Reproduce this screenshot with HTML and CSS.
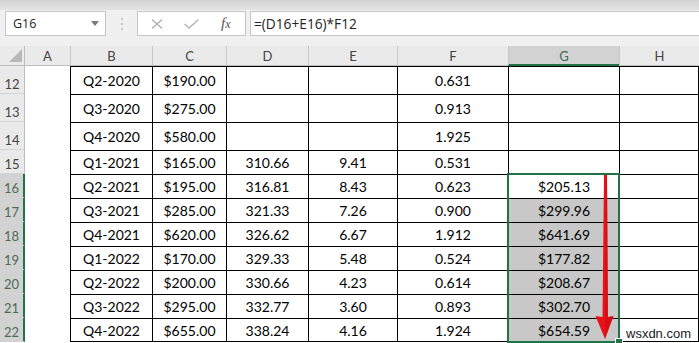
FILE: index.html
```html
<!DOCTYPE html>
<html lang="en">
<head>
  <meta charset="UTF-8" />
  <meta name="viewport" content="width=device-width, initial-scale=1.0" />
  <title>Quarterly Price Sheet</title>
  <link rel="stylesheet" href="styles.css">
</head>
<body>

  <div class="ribbon-edge"></div>
  <div class="fbar">
    <div class="namebox">
      <span>G16</span>
      <svg class="dropdown" width="8" height="5" viewBox="0 0 8 5"><path d="M0 0 H8 L4 5 Z" fill="#7a7a7a"/></svg>
    </div>
    <svg class="grip" width="4" height="14" viewBox="0 0 4 14">
      <rect x="1" y="1" width="2" height="2" fill="#c4c4c4"/>
      <rect x="1" y="6" width="2" height="2" fill="#c4c4c4"/>
      <rect x="1" y="11" width="2" height="2" fill="#c4c4c4"/>
    </svg>
    <div class="fxbox">
      <svg class="cancel" width="12" height="10" viewBox="0 0 12 10"><path d="M1 0.5 L11 9.5 M11 0.5 L1 9.5" stroke="#ababab" stroke-width="1.2" fill="none"/></svg>
      <svg class="enter" width="15" height="10" viewBox="0 0 15 10"><path d="M0.5 5 L5 9 L14.5 0.5" stroke="#b4b4b4" stroke-width="1.4" fill="none"/></svg>
      <span class="fx">f<i>x</i></span>
    </div>
    <div class="formula">=(D16+E16)*F12</div>
  </div>

  <div class="sheet">
    <div class="row">
      <div class="corner">
        <svg width="13" height="13" viewBox="0 0 13 13"><path d="M13 0 V13 H0 Z" fill="#b8b8b8"/></svg>
      </div>
      <div class="ch first">A</div>
      <div class="ch">B</div>
      <div class="ch">C</div>
      <div class="ch">D</div>
      <div class="ch">E</div>
      <div class="ch">F</div>
      <div class="ch on">G</div>
      <div class="ch">H</div>
    </div>

    <div class="row tall">
      <div class="rh">12</div><div class="a"></div>
      <div class="c">Q2-2020</div><div class="c">$190.00</div><div class="c"></div><div class="c"></div>
      <div class="c">0.631</div><div class="c"></div><div class="c h"></div>
    </div>
    <div class="row tall">
      <div class="rh">13</div><div class="a"></div>
      <div class="c">Q3-2020</div><div class="c">$275.00</div><div class="c"></div><div class="c"></div>
      <div class="c">0.913</div><div class="c"></div><div class="c h"></div>
    </div>
    <div class="row tall">
      <div class="rh">14</div><div class="a"></div>
      <div class="c">Q4-2020</div><div class="c">$580.00</div><div class="c"></div><div class="c"></div>
      <div class="c">1.925</div><div class="c"></div><div class="c h"></div>
    </div>
    <div class="row">
      <div class="rh">15</div><div class="a"></div>
      <div class="c">Q1-2021</div><div class="c">$165.00</div><div class="c">310.66</div><div class="c">9.41</div>
      <div class="c">0.531</div><div class="c"></div><div class="c h"></div>
    </div>
    <div class="row">
      <div class="rh on">16</div><div class="a"></div>
      <div class="c">Q2-2021</div><div class="c">$195.00</div><div class="c">316.81</div><div class="c">8.43</div>
      <div class="c">0.623</div><div class="c">$205.13</div><div class="c h"></div>
    </div>
    <div class="row">
      <div class="rh on">17</div><div class="a"></div>
      <div class="c">Q3-2021</div><div class="c">$285.00</div><div class="c">321.33</div><div class="c">7.26</div>
      <div class="c">0.900</div><div class="c sel">$299.96</div><div class="c h"></div>
    </div>
    <div class="row">
      <div class="rh on">18</div><div class="a"></div>
      <div class="c">Q4-2021</div><div class="c">$620.00</div><div class="c">326.62</div><div class="c">6.67</div>
      <div class="c">1.912</div><div class="c sel">$641.69</div><div class="c h"></div>
    </div>
    <div class="row">
      <div class="rh on">19</div><div class="a"></div>
      <div class="c">Q1-2022</div><div class="c">$170.00</div><div class="c">329.33</div><div class="c">5.48</div>
      <div class="c">0.524</div><div class="c sel">$177.82</div><div class="c h"></div>
    </div>
    <div class="row">
      <div class="rh on">20</div><div class="a"></div>
      <div class="c">Q2-2022</div><div class="c">$200.00</div><div class="c">330.66</div><div class="c">4.23</div>
      <div class="c">0.614</div><div class="c sel">$208.67</div><div class="c h"></div>
    </div>
    <div class="row">
      <div class="rh on">21</div><div class="a"></div>
      <div class="c">Q3-2022</div><div class="c">$295.00</div><div class="c">332.77</div><div class="c">3.60</div>
      <div class="c">0.893</div><div class="c sel">$302.70</div><div class="c h"></div>
    </div>
    <div class="row last">
      <div class="rh on">22</div><div class="a"></div>
      <div class="c">Q4-2022</div><div class="c">$655.00</div><div class="c">338.24</div><div class="c">4.16</div>
      <div class="c">1.924</div><div class="c sel">$654.59</div><div class="c h"></div>
    </div>

    <!-- selected range G16:G22 with its fill handle -->
    <div class="selection"></div>
    <div class="handle"></div>

    <!-- red drag arrow drawn over the sheet -->
    <svg class="arrow" width="699" height="297" viewBox="0 0 699 297">
      <polygon points="604,129 607,129 608,271 613.5,270 605,293 595.5,270 602.5,271" fill="#e8121a"/>
      <polygon points="606,129 607,129 608,271 613.5,270 605,293" fill="#c40a10" opacity="0.45"/>
    </svg>

    <div class="watermark">wsxdn.com</div>
  </div>

</body>
</html>
```

FILE: styles.css
```css
body {
  margin: 0;
  width: 699px;
  height: 343px;
  overflow: hidden;
  background: #fff;
  font-family: Lato, "Liberation Sans", sans-serif;
  color: #000;
}
.ribbon-edge {
  height: 10px;
  background: linear-gradient(#d4d4d4, #e3e3e3);
}
.fbar {
  display: flex;
  height: 25px;
  padding: 1px 0 10px 5px;
  background: #f0f0f0;
}
.namebox {
  width: 101px;
  box-sizing: border-box;
  display: flex;
  align-items: center;
  padding-left: 7px;
  background: #fff;
  border: 1px solid #c6c6c6;
  font: 12.5px "Open Sans", sans-serif;
  color: #222;
}
.namebox .dropdown {
  margin-left: auto;
  margin-right: 6px;
}
.grip {
  margin: 6px 0 0 14px;
}
.fxbox {
  width: 109px;
  box-sizing: border-box;
  margin-left: 13px;
  display: flex;
  align-items: center;
  background: #fff;
  border: 1px solid #c6c6c6;
}
.fxbox .cancel {
  margin-left: 13px;
}
.fxbox .enter {
  margin-left: 21px;
}
.fxbox .fx {
  margin-left: 22px;
  font: italic 15px "Liberation Serif", serif;
  color: #555;
}
.fxbox .fx i {
  font-size: 12px;
}
.formula {
  flex: 1;
  margin-left: 4px;
  padding-left: 3px;
  display: flex;
  align-items: center;
  background: #fff;
  border: 1px solid #c6c6c6;
  border-right: none;
  font: 13.7px "Open Sans", sans-serif;
  color: #222;
}

.sheet {
  position: relative;
  display: grid;
  grid-template-columns: 25px 45px 82px 74px 82px 89px 111px 111px 80px;
  grid-template-rows: 20px repeat(3, 28px) repeat(8, 24px);
}
.row {
  display: contents;
}
.corner {
  background: #eaeaea;
  border-right: 1px solid #bdbdbd;
  border-bottom: 1px solid #bdbdbd;
  display: flex;
  justify-content: flex-end;
  align-items: flex-end;
  padding: 0 2px 3px 0;
}
.ch {
  background: #eaeaea;
  border-left: 1px solid #c8c8c8;
  border-bottom: 1px solid #bdbdbd;
  text-align: center;
  line-height: 20px;
  font-size: 13px;
  color: #444;
}
.ch.first {
  border-left: none;
}
.ch.on {
  background: #d2d2d2;
  border-bottom: 2px solid #217346;
  color: #3d6a4e;
}
.rh {
  background: #eaeaea;
  border-right: 1px solid #bdbdbd;
  border-bottom: 1px solid #d4d4d4;
  display: flex;
  justify-content: center;
  align-items: flex-end;
  padding-bottom: 1px;
  line-height: 16px;
  font-size: 13px;
  color: #444;
}
.rh.on {
  background: #d2d2d2;
  border-right: 2px solid #217346;
  color: #4b6b57;
}
.c {
  border-left: 1px solid #000;
  border-top: 1px solid #000;
  display: flex;
  justify-content: center;
  align-items: flex-end;
  padding-bottom: 3px;
  line-height: 16px;
  font-size: 14px;
}
.tall .c {
  padding-bottom: 5px;
}
.last .c {
  border-bottom: 1px solid #000;
  padding-bottom: 2px;
}
.c.h {
  border-right: 1px solid #000;
}
.c.sel {
  background: #c8c8c8;
}
.selection {
  position: absolute;
  left: 507px;
  top: 127px;
  width: 113px;
  height: 170px;
  box-sizing: border-box;
  border: 2px solid #217346;
}
.handle {
  position: absolute;
  left: 615px;
  top: 292px;
  width: 6px;
  height: 6px;
  background: #217346;
  border: 1px solid #fff;
}
.arrow {
  position: absolute;
  left: 0;
  top: 0;
}
.watermark {
  position: absolute;
  left: 626px;
  top: 281px;
  font: 13px "Liberation Sans", sans-serif;
  line-height: 14px;
  color: #1a1a1a;
}
```
